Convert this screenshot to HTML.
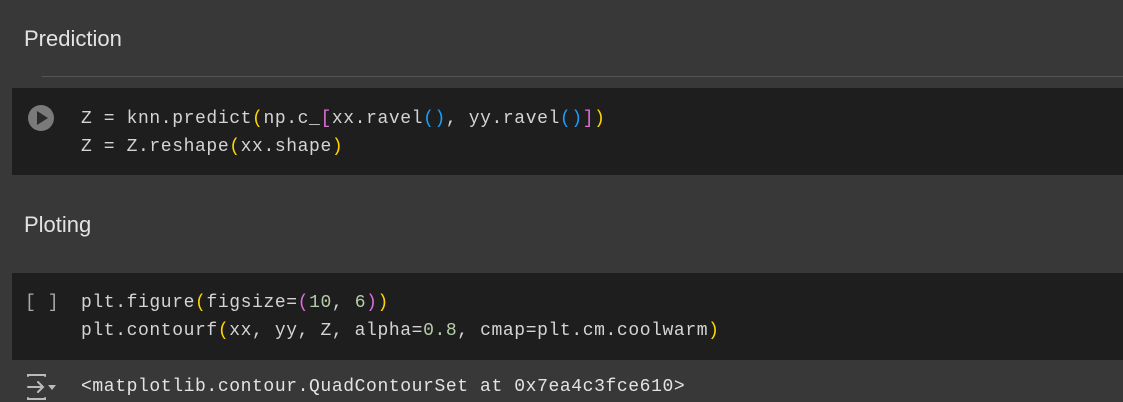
<!DOCTYPE html>
<html><head><style>
body{margin:0;width:1123px;height:402px;background:#383838;position:relative;overflow:hidden;font-family:"Liberation Sans",sans-serif}
.h{position:absolute;left:24px;color:#e3e3e3;font-size:22px}
.cell{position:absolute;left:12px;right:0;background:#1e1e1e}
.code{position:absolute;left:81px;font-family:"Liberation Mono",monospace;font-size:18px;letter-spacing:0.6px;color:#d4d4d4;line-height:28px;white-space:pre}
.y{color:#ffd700}.m{color:#da70d6}.b{color:#179fff}.n{color:#b5cea8}
</style></head><body>
<div class="h" style="top:26px">Prediction</div>
<div style="position:absolute;left:42px;right:0;top:76px;height:1px;background:#555"></div>
<div class="cell" style="top:88px;height:87px"></div>
<svg style="position:absolute;left:27px;top:104px" width="28" height="28"><circle cx="14" cy="14" r="13" fill="#7a7a7a"/><path d="M10 7 L21 14 L10 21Z" fill="#2a2a2a"/></svg>
<div class="code" style="top:105px">Z = knn.predict<span class="y">(</span>np.c_<span class="m">[</span>xx.ravel<span class="b">()</span>, yy.ravel<span class="b">()</span><span class="m">]</span><span class="y">)</span>
Z = Z.reshape<span class="y">(</span>xx.shape<span class="y">)</span></div>
<div class="h" style="top:212px">Ploting</div>
<div class="cell" style="top:273px;height:87px"></div>
<div class="code" style="top:289px;left:25px;color:#aaa">[ ]</div>
<div class="code" style="top:289px">plt.figure<span class="y">(</span>figsize=<span class="m">(</span><span class="n">10</span>, <span class="n">6</span><span class="m">)</span><span class="y">)</span>
plt.contourf<span class="y">(</span>xx, yy, Z, alpha=<span class="n">0.8</span>, cmap=plt.cm.coolwarm<span class="y">)</span></div>
<svg style="position:absolute;left:25px;top:372px" width="36" height="30" fill="none" stroke="#bbb" stroke-width="2" stroke-linecap="round"><path d="M3 4v-1h17v1M3 26v1h17v-1M3 15h14M13 10l5 5-5 5"/><path d="M23 13h8l-4 5z" fill="#bbb" stroke="none"/></svg>
<div class="code" style="top:373px;color:#e3e3e3">&lt;matplotlib.contour.QuadContourSet at 0x7ea4c3fce610&gt;</div>
</body></html>
